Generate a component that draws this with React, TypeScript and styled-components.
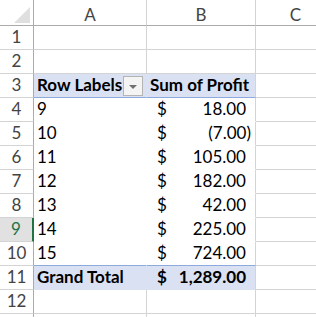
import React from 'react'
import styled, { createGlobalStyle } from 'styled-components'

const GlobalStyle = createGlobalStyle`
  html, body {
    margin: 0;
    padding: 0;
    background: #ffffff;
  }
  body {
    font-family: Lato, "Liberation Sans", sans-serif;
    color: #000000;
  }
`

const GRID = '#d4d4d4'
const HEAD_LINE = '#ababab'
const PIVOT_BG = '#d9e1f2'
const PIVOT_LINE = '#8ea9db'

const Sheet = styled.div`
  display: grid;
  grid-template-columns: 34px 113px 109px 80px;
  grid-template-rows: 26px;
  grid-auto-rows: 24px;
  width: 316px;
  height: 317px;
  overflow: hidden;
  background: #ffffff;
`

const Corner = styled.div`
  box-sizing: border-box;
  position: relative;
  border-right: 1px solid ${HEAD_LINE};
  border-bottom: 1px solid ${HEAD_LINE};
`

const CornerTriangle = styled.div`
  position: absolute;
  right: 3px;
  bottom: 2px;
  width: 0;
  height: 0;
  border-left: 16px solid transparent;
  border-bottom: 16px solid #dfdfdf;
`

const ColHeader = styled.div`
  box-sizing: border-box;
  display: flex;
  align-items: center;
  justify-content: center;
  padding-top: 3px;
  border-right: 1px solid ${GRID};
  border-bottom: 1px solid ${HEAD_LINE};
  font-size: 17px;
  color: #444444;
`

const RowHeader = styled.div<{ $selected?: boolean }>`
  box-sizing: border-box;
  display: flex;
  align-items: flex-end;
  justify-content: center;
  padding-bottom: 2px;
  font-size: 17px;
  color: ${(p) => (p.$selected ? '#217346' : '#444444')};
  background: ${(p) => (p.$selected ? '#e1e1e1' : '#ffffff')};
  border-right: ${(p) => (p.$selected ? '2px solid #217346' : `1px solid ${HEAD_LINE}`)};
  border-bottom: 1px solid ${GRID};
`

type Kind = 'plain' | 'head' | 'body' | 'total'

const Cell = styled.div<{ $kind: Kind; $inner?: boolean; $blueBottom?: boolean }>`
  box-sizing: border-box;
  display: flex;
  align-items: flex-end;
  justify-content: space-between;
  padding: 0 3px 2px 3px;
  font-size: 17px;
  font-weight: ${(p) => (p.$kind === 'head' || p.$kind === 'total' ? 700 : 400)};
  white-space: nowrap;
  background: ${(p) => (p.$kind === 'head' || p.$kind === 'total' ? PIVOT_BG : '#ffffff')};
  border-right: 1px solid
    ${(p) => {
      if (p.$kind === 'plain' || !p.$inner) return GRID
      if (p.$kind === 'body') return '#ffffff'
      return PIVOT_BG
    }};
  border-bottom: 1px solid
    ${(p) => {
      if (p.$kind === 'head' || p.$blueBottom) return PIVOT_LINE
      if (p.$kind === 'body') return '#ffffff'
      if (p.$kind === 'total') return PIVOT_BG
      return GRID
    }};
`

const FilterButton = styled.div`
  box-sizing: border-box;
  width: 20px;
  height: 20px;
  margin-bottom: -1px;
  display: flex;
  align-items: center;
  justify-content: center;
  border: 1px solid #b4b4b4;
  background: #f4f4f4;
`

const FilterArrow = styled.div`
  width: 0;
  height: 0;
  border-left: 4px solid transparent;
  border-right: 4px solid transparent;
  border-top: 4px solid #707070;
  margin-top: 2px;
`

const Money = styled.div`
  display: flex;
  justify-content: space-between;
  width: 100%;
  padding-left: 7px;
  padding-right: 1px;
`

const Amount = styled.span<{ $negative: boolean }>`
  padding-right: ${(p) => (p.$negative ? '0' : '5px')};
`

const rows = [
  { label: '9', value: 18 },
  { label: '10', value: -7 },
  { label: '11', value: 105 },
  { label: '12', value: 182 },
  { label: '13', value: 42 },
  { label: '14', value: 225 },
  { label: '15', value: 724 },
]

const formatAmount = (v: number) => {
  const text = Math.abs(v).toLocaleString('en-US', { minimumFractionDigits: 2, maximumFractionDigits: 2 })
  return v < 0 ? `(${text})` : text
}

const Accounting = ({ value }: { value: number }) => (
  <Money>
    <span>$</span>
    <Amount $negative={value < 0}>{formatAmount(value)}</Amount>
  </Money>
)

const EmptyRow = ({ n }: { n?: number }) => (
  <>
    <RowHeader>{n}</RowHeader>
    <Cell $kind="plain" />
    <Cell $kind="plain" />
    <Cell $kind="plain" />
  </>
)

export default function App() {
  const total = rows.reduce((sum, r) => sum + r.value, 0)

  return (
    <>
      <GlobalStyle />
      <Sheet>
        <Corner>
          <CornerTriangle />
        </Corner>
        <ColHeader>A</ColHeader>
        <ColHeader>B</ColHeader>
        <ColHeader>C</ColHeader>

        <EmptyRow n={1} />
        <EmptyRow n={2} />

        <RowHeader>3</RowHeader>
        <Cell $kind="head" $inner>
          <span>Row Labels</span>
          <FilterButton>
            <FilterArrow />
          </FilterButton>
        </Cell>
        <Cell $kind="head">Sum of Profit</Cell>
        <Cell $kind="plain" />

        {rows.map((r, i) => {
          const last = i === rows.length - 1
          return (
            <React.Fragment key={r.label}>
              <RowHeader $selected={r.label === '14'}>{i + 4}</RowHeader>
              <Cell $kind="body" $inner $blueBottom={last}>
                {r.label}
              </Cell>
              <Cell $kind="body" $blueBottom={last}>
                <Accounting value={r.value} />
              </Cell>
              <Cell $kind="plain" />
            </React.Fragment>
          )
        })}

        <RowHeader>11</RowHeader>
        <Cell $kind="total" $inner>
          Grand Total
        </Cell>
        <Cell $kind="total">
          <Accounting value={total} />
        </Cell>
        <Cell $kind="plain" />

        <EmptyRow n={12} />
        <EmptyRow />
      </Sheet>
    </>
  )
}
